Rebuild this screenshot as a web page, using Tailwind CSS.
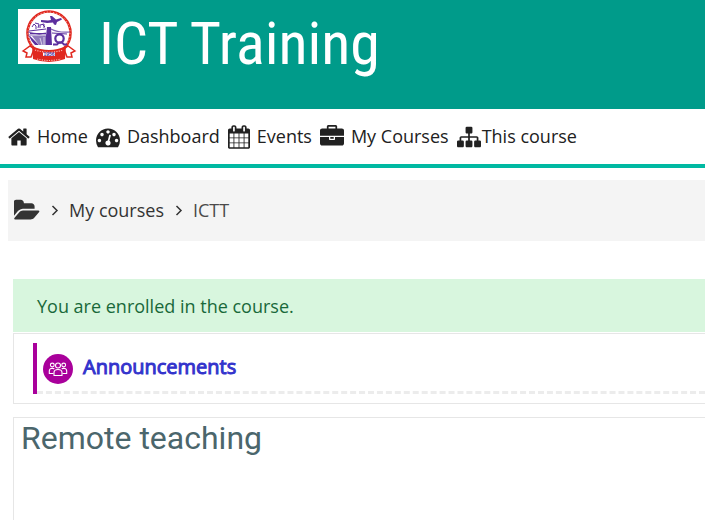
<!DOCTYPE html>
<html lang="en">
<head>
<meta charset="utf-8">
<meta name="viewport" content="width=device-width, initial-scale=1">
<title>ICT Training</title>
<script src="https://cdn.jsdelivr.net/npm/@tailwindcss/browser@4"></script>
</head>
<body class="flex min-h-screen flex-col bg-white font-['Open_Sans',sans-serif] text-lg text-[#212121]">
<header class="flex items-start gap-[19px] bg-[#009b8a] px-[18px] pt-[9px] pb-[30px]">
  <a href="#" aria-label="College home" class="block shrink-0">
    <svg class="block w-[62px] h-[55px]" viewBox="0 0 62 55" role="img" aria-label="College crest">
      <rect width="62" height="55" fill="#fff"/>
      <circle cx="31" cy="24" r="21.500" fill="#fff" stroke="#e0281f" stroke-width="2.600"/>
      <circle cx="31" cy="24" r="21" fill="none" stroke="#f7b5ae" stroke-width="1" stroke-dasharray="1.200 2"/>
      <g fill="none" stroke="#5c2f9e">
        <path d="M14 18l2-3 2 2v3M17 14l4 1-1 4M22 19v-3l4-1v4M24 15l3 3" stroke-width="1"/>
        <path d="M10 23q10 3 18 1M33 20q7 4 19 3M10 26h20" stroke-width="1.200" stroke="#8164b4"/>
        <path d="M11 22l17-2M12 24.500h16M34 24l15 1" stroke-width="1"/>
        <circle cx="41.500" cy="29.500" r="4.200" stroke-width="2.200"/>
        <path d="M35 35.500h4l2-2h3l2 2h3" stroke-width="1.800"/>
      </g>
      <path d="M23 11l7 .5 3-.5-1-4h2l4 3.500 5-1.500 1 1.500-5 2.500-1 3-2-.5-1-2-6 .5-6-1z" fill="#5c2f9e"/>
      <path d="M29 18h4l1 18h-7zM12 27l9 9h-4q-4-4-6-9z" fill="#5c2f9e"/>
      <path d="M14 27h14v9h-7z" fill="#8f7abb"/>
      <path d="M22 29l2 7M26 28v8" stroke="#d8cfe8" stroke-width="1"/>
      <path d="M5 42l7-5 4 3-3 8-5 0 1-4zM57 42l-7-5-4 3 3 8 5 0-1-4z" fill="#fff" stroke="#e0281f" stroke-width="1.500"/>
      <path d="M14 37q17 8 34 0l-1 13q-16 6-32 0z" fill="#e0281f"/>
      <path d="M25 43.500h12v3.500H25z" fill="#fff"/>
      <path d="M17 41q14 4.500 28 0M19 50q12 3 24 0" fill="none" stroke="#f7b5ae" stroke-width="1.200" stroke-dasharray="1.200 1.200"/>
      <text x="31" y="47" text-anchor="middle" fill="#4a2a9c" font-family="Liberation Sans, sans-serif" font-size="5" font-weight="700">1956</text>
    </svg>
  </a>
  <h1 class="font-['Roboto_Condensed','Liberation_Sans_Narrow',sans-serif] text-[60px] leading-[70px] text-white">ICT Training</h1>
</header>

<nav aria-label="Main" class="flex items-center gap-2 h-[59px] shrink-0 border-b-4 border-[#00b9a2] pl-2 whitespace-nowrap">
  <a href="#" class="flex items-center gap-[7px]">
    <svg class="w-[22px] h-6" viewBox="64 0 1664 1792" fill="currentColor" aria-hidden="true"><path d="M1472 992v480q0 26-19 45t-45 19h-384v-384h-256v384h-384q-26 0-45-19t-19-45v-480q0-1 .5-3t.5-3l575-474 575 474q1 2 1 6zm223-69l-62 74q-8 9-21 11h-3q-13 0-21-7l-692-577-692 577q-12 8-24 7-13-2-21-11l-62-74q-8-10-7-23.5t11-21.5l719-599q32-26 76-26t76 26l244 204v-195q0-14 9-23t23-9h192q14 0 23 9t9 23v408l219 182q10 8 11 21.5t-7 23.5z"/></svg>
    <span class="pb-0.5">Home</span>
  </a>
  <a href="#" class="flex items-center gap-[7px]">
    <svg class="size-6" viewBox="0 0 1792 1792" fill="currentColor" aria-hidden="true"><path d="M384 1152q0-53-37.5-90.5t-90.5-37.5-90.5 37.5-37.5 90.5 37.5 90.5 90.5 37.5 90.5-37.5 37.5-90.5zm192-448q0-53-37.5-90.5t-90.5-37.5-90.5 37.5-37.5 90.5 37.5 90.5 90.5 37.5 90.5-37.5 37.5-90.5zm428 481l101-382q6-26-7.5-48.5t-38.5-29.5-48 6.5-30 39.5l-101 382q-60 5-107 43.5t-63 98.5q-20 77 20 146t117 89 146-20 89-117q16-60-6-117t-72-91zm660-33q0-53-37.5-90.5t-90.5-37.5-90.5 37.5-37.5 90.5 37.5 90.5 90.5 37.5 90.5-37.5 37.5-90.5zm-640-640q0-53-37.5-90.5t-90.5-37.5-90.5 37.5-37.5 90.5 37.5 90.5 90.5 37.5 90.5-37.5 37.5-90.5zm448 192q0-53-37.5-90.5t-90.5-37.5-90.5 37.5-37.5 90.5 37.5 90.5 90.5 37.5 90.5-37.5 37.5-90.5zm320 448q0 261-141 483-19 29-54 29h-1402q-35 0-54-29-141-221-141-483 0-182 71-348t191-286 286-191 348-71 348 71 286 191 191 286 71 348z"/></svg>
    <span class="pb-0.5">Dashboard</span>
  </a>
  <a href="#" class="flex items-center gap-[7px]">
    <svg class="w-[22px] h-6" viewBox="64 0 1664 1792" fill="currentColor" aria-hidden="true"><path d="M192 1664h288v-288h-288v288zm352 0h320v-288h-320v288zm-352-352h288v-320h-288v320zm352 0h320v-320h-320v320zm-352-384h288v-288h-288v288zm736 736h320v-288h-320v288zm-384-736h320v-288h-320v288zm768 736h288v-288h-288v288zm-384-352h320v-320h-320v320zm-352-864v-288q0-13-9.5-22.5t-22.5-9.5h-64q-13 0-22.5 9.5t-9.5 22.5v288q0 13 9.5 22.5t22.5 9.5h64q13 0 22.5-9.5t9.5-22.5zm736 864h288v-320h-288v320zm-384-384h320v-288h-320v288zm384 0h288v-288h-288v288zm32-480v-288q0-13-9.5-22.5t-22.5-9.5h-64q-13 0-22.5 9.5t-9.5 22.5v288q0 13 9.5 22.5t22.5 9.5h64q13 0 22.5-9.5t9.5-22.5zm384-64v1280q0 52-38 90t-90 38h-1408q-52 0-90-38t-38-90v-1280q0-52 38-90t90-38h128v-96q0-66 47-113t113-47h64q66 0 113 47t47 113v96h384v-96q0-66 47-113t113-47h64q66 0 113 47t47 113v96h128q52 0 90 38t38 90z"/></svg>
    <span class="pb-0.5">Events</span>
  </a>
  <a href="#" class="flex items-center gap-[7px]">
    <svg class="size-6" viewBox="0 0 1792 1792" fill="currentColor" aria-hidden="true"><path d="M640 256h512v-128h-512v128zm1152 640v480q0 66-47 113t-113 47h-1472q-66 0-113-47t-47-113v-480h672v160q0 26 19 45t45 19h320q26 0 45-19t19-45v-160h672zm-768 0v128h-256v-128h256zm768-480v384h-1792v-384q0-66 47-113t113-47h352v-160q0-40 28-68t68-28h576q40 0 68 28t28 68v160h352q66 0 113 47t47 113z"/></svg>
    <span class="pb-0.5">My Courses</span>
  </a>
  <a href="#" class="flex items-center">
    <svg class="size-6" viewBox="0 0 1792 1792" fill="currentColor" aria-hidden="true"><path d="M1792 1248v320q0 40-28 68t-68 28h-320q-40 0-68-28t-28-68v-320q0-40 28-68t68-28h96v-192h-512v192h96q40 0 68 28t28 68v320q0 40-28 68t-68 28h-320q-40 0-68-28t-28-68v-320q0-40 28-68t68-28h96v-192h-512v192h96q40 0 68 28t28 68v320q0 40-28 68t-68 28h-320q-40 0-68-28t-28-68v-320q0-40 28-68t68-28h96v-192q0-52 38-90t90-38h512v-192h-96q-40 0-68-28t-28-68v-320q0-40 28-68t68-28h320q40 0 68 28t28 68v320q0 40-28 68t-68 28h-96v192h512q52 0 90 38t38 90v192h96q40 0 68 28t28 68z"/></svg>
    <span class="pb-0.5 pl-px">This course</span>
  </a>
</nav>

<nav aria-label="Breadcrumb" class="mt-3 ml-2 bg-[#f4f4f4] px-1.5 pt-4 pb-[17px]">
  <ol class="flex items-center text-[#333]">
    <li><a href="#" aria-label="Courses" class="block"><svg class="block w-[26px] h-[25px]" viewBox="0 0 1856 1792" fill="currentColor" aria-hidden="true"><path d="M1815 952q0 31-31 66l-336 396q-43 51-120.5 86.5t-143.5 35.5h-1088q-34 0-60.5-13t-26.5-43q0-31 31-66l336-396q43-51 120.5-86.5t143.5-35.5h1088q34 0 60.5 13t26.5 43zm-343-344v160h-832q-94 0-197 47.5t-164 119.5l-337 396-5 6q0-4-.5-12.5t-.5-12.5v-960q0-92 66-158t158-66h320q92 0 158 66t66 158v32h544q92 0 158 66t66 158z"/></svg></a></li>
    <li class="flex items-center"><svg class="ml-[11px] mr-[10px] w-2 h-3" viewBox="0 0 8 12" fill="none" stroke="currentColor" stroke-width="1.500" aria-hidden="true"><path d="M1.500 2L6 6.500l-4.500 4.500"/></svg><a href="#">My courses</a></li>
    <li class="flex items-center text-[#4a4a4a]"><svg class="ml-[11px] mr-[10px] w-2 h-3" viewBox="0 0 8 12" fill="none" stroke="#333" stroke-width="1.500" aria-hidden="true"><path d="M1.500 2L6 6.500l-4.500 4.500"/></svg><span aria-current="page">ICTT</span></li>
  </ol>
</nav>

<main class="mt-[38px] ml-[13px] flex grow flex-col">
  <div role="status" class="bg-[#d8f6de] px-6 pt-[13px] pb-3 text-[#18693a]">You are enrolled in the course.</div>
  <section class="mt-px border border-r-0 border-[#e6e6e6] pl-[19px] py-[9px]">
    <div class="flex items-center border-l-4 border-[#a9009b]">
      <div class="flex grow items-center gap-[10px] border-b-3 border-dashed border-[#ececec] pl-1.5 h-[51px]">
        <svg class="mt-1 size-[30px] shrink-0" viewBox="0 0 30 30" aria-hidden="true">
          <circle cx="15" cy="15" r="15" fill="#a9009b"/>
          <g fill="none" stroke="#fff" stroke-width="1.100" stroke-linejoin="round">
            <circle cx="15" cy="11.500" r="2.500"/><circle cx="9.300" cy="11" r="1.900"/><circle cx="20.700" cy="11" r="1.900"/>
            <path d="M11 21.500v-3q0-3 4-3t4 3v3z"/>
            <path d="M10.500 19.500H6.300v-2.500q0-2.500 3-2.700q1.300 0 2 .7M19.500 19.500h4.200v-2.500q0-2.500-3-2.700q-1.300 0-2 .7"/>
          </g>
        </svg>
        <a href="#" class="text-xl text-[#3333cc] [-webkit-text-stroke:1px_#3333cc]">Announcements</a>
      </div>
    </div>
  </section>
  <section class="mt-[13px] grow border border-r-0 border-b-0 border-[#e6e6e6] px-[7px]">
    <h2 class="font-[Roboto,sans-serif] text-[32px] leading-10 text-[#4b666c]">Remote teaching</h2>
  </section>
</main>
</body>
</html>
